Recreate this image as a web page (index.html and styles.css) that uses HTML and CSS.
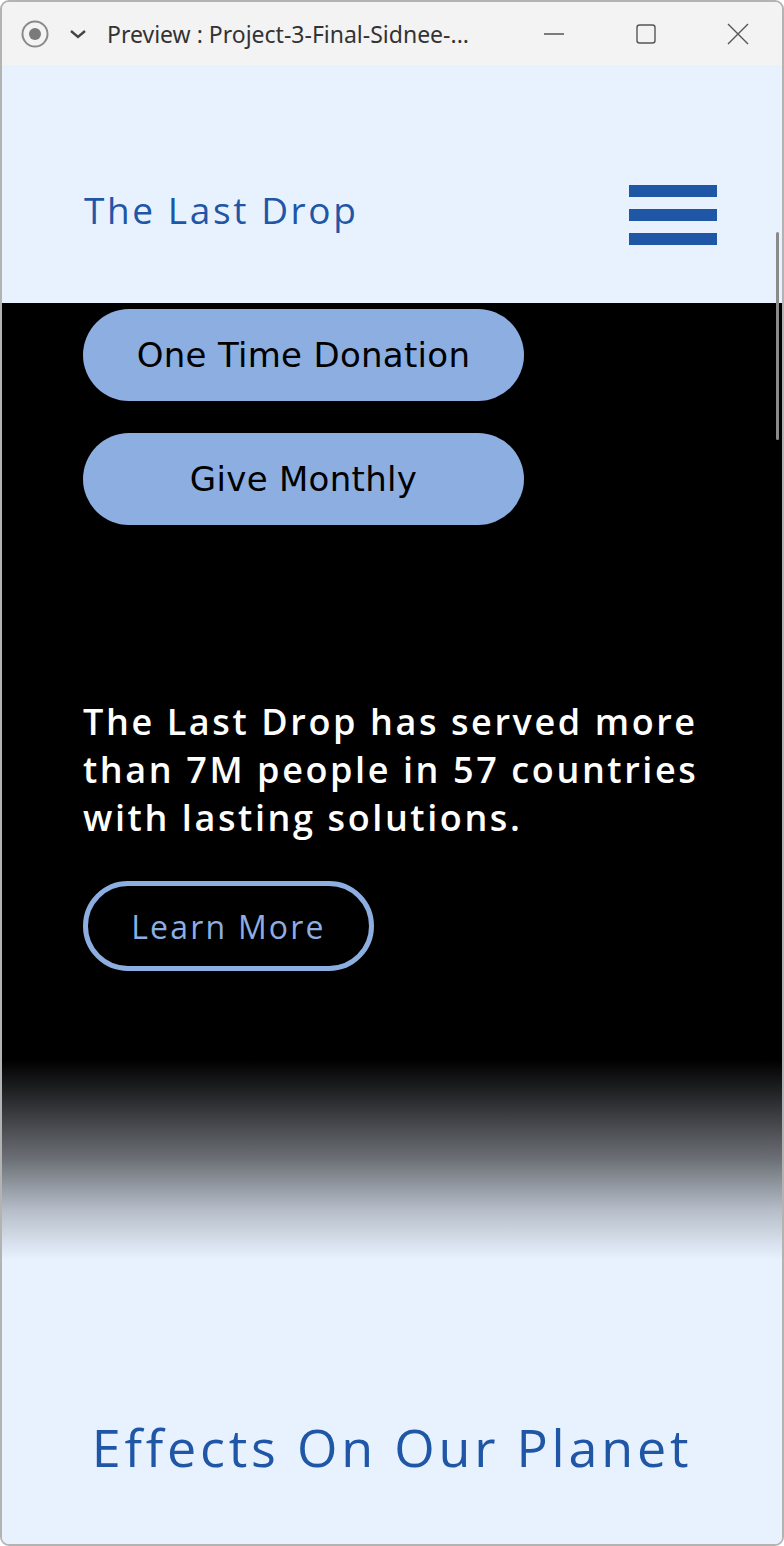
FILE: index.html
```html
<!DOCTYPE html>
<html lang="en">
<head>
<meta charset="utf-8">
<title>The Last Drop</title>
<link rel="stylesheet" href="styles.css">
</head>
<body>
<div class="window">
  <div class="titlebar">
    <div class="tb-left">
      <svg class="tb-rec" width="28" height="28" viewBox="0 0 28 28"><circle cx="14" cy="14" r="12.5" fill="none" stroke="#8a8a8a" stroke-width="2"/><circle cx="14" cy="14" r="6" fill="#7a7a7a"/></svg>
      <svg class="tb-chev" width="18" height="12" viewBox="0 0 18 12"><path d="M2 3 L9 9 L16 3" fill="none" stroke="#444" stroke-width="2.4"/></svg>
      <span class="tb-title">Preview : Project-3-Final-Sidnee-...</span>
    </div>
    <div class="tb-controls">
      <svg width="22" height="22" viewBox="0 0 22 22"><path d="M1 11 H21" stroke="#555" stroke-width="1.4"/></svg>
      <svg width="22" height="22" viewBox="0 0 22 22"><rect x="2" y="2" width="18" height="18" rx="2.5" fill="none" stroke="#555" stroke-width="1.4"/></svg>
      <svg width="22" height="22" viewBox="0 0 22 22"><path d="M1 1 L21 21 M21 1 L1 21" stroke="#555" stroke-width="1.4"/></svg>
    </div>
  </div>
  <div class="page">
    <header class="site-header">
      <span class="logo">The Last Drop</span>
      <div class="burger"><span></span><span></span><span></span></div>
    </header>
    <section class="hero">
      <a class="pill">One Time Donation</a>
      <a class="pill">Give Monthly</a>
      <p class="hero-text">The Last Drop has served more than 7M people in 57 countries with lasting solutions.</p>
      <a class="outline-btn">Learn More</a>
    </section>
    <div class="fade"></div>
    <section class="effects">
      <h2>Effects On Our Planet</h2>
    </section>
    <div class="scrollbar"></div>
  </div>
</div>
</body>
</html>
```
FILE: styles.css
```css
html, body {
  margin: 0;
  padding: 0;
  background: #ffffff;
}
.window {
  width: 784px;
  height: 1546px;
  box-sizing: border-box;
  border: 2px solid #b3b3b3;
  border-radius: 9px;
  overflow: hidden;
  display: flex;
  flex-direction: column;
  background: #f3f3f3;
}
.titlebar {
  height: 63px;
  flex: none;
  display: flex;
  align-items: center;
  justify-content: space-between;
  background: #f3f3f3;
}
.tb-left {
  display: flex;
  align-items: center;
  padding-left: 19px;
}
.tb-chev { margin-left: 20px; }
.tb-title {
  margin-left: 20px;
  font-family: "Noto Sans", "Open Sans", sans-serif;
  font-size: 23px;
  color: #333;
  letter-spacing: 0;
}
.tb-controls {
  display: flex;
  align-items: center;
  gap: 70px;
  padding-right: 33px;
}
.page {
  position: relative;
  flex: 1;
  display: flex;
  flex-direction: column;
  background: #e8f2fe;
}
.site-header {
  height: 238px;
  box-sizing: border-box;
  display: flex;
  align-items: center;
  justify-content: space-between;
  padding: 62px 65px 0 82px;
}
.logo {
  font-family: "Open Sans", sans-serif;
  font-weight: 500;
  font-size: 37px;
  color: #1f56a6;
  letter-spacing: 2.6px;
  margin-top: -12px;
}
.burger {
  width: 88px;
  display: flex;
  flex-direction: column;
  gap: 12px;
}
.burger span {
  display: block;
  height: 12px;
  background: #1f56a6;
}
.hero {
  background: #000;
  display: flex;
  flex-direction: column;
  align-items: flex-start;
  padding: 6px 0 89px 81px;
}
.pill {
  width: 441px;
  height: 92px;
  border-radius: 46px;
  background: #8caee0;
  display: flex;
  align-items: center;
  justify-content: center;
  font-family: "DejaVu Sans", sans-serif;
  font-size: 34px;
  color: #000;
  margin-bottom: 32px;
  letter-spacing: 0.3px;
}
.hero-text {
  margin: 141px 0 39px;
  width: 640px;
  font-family: "Open Sans", sans-serif;
  font-weight: 600;
  font-size: 36px;
  line-height: 48px;
  color: #fff;
  letter-spacing: 2.6px;
}
.outline-btn {
  width: 291px;
  height: 90px;
  box-sizing: border-box;
  border: 5px solid #8caee0;
  border-radius: 45px;
  display: flex;
  align-items: center;
  justify-content: center;
  font-family: "Open Sans", sans-serif;
  font-size: 32px;
  color: #8caee0;
  letter-spacing: 2.2px;
}
.fade {
  height: 200px;
  background: linear-gradient(to bottom, #000 0%, #2a2b2e 20%, #6d7177 50%, #b6bdc8 75%, #e8f2fe 100%);
}
.effects {
  flex: 1;
  display: flex;
  justify-content: center;
}
.effects h2 {
  margin: 155px 0 0;
  font-family: "Open Sans", sans-serif;
  font-weight: 500;
  font-size: 52px;
  line-height: 64px;
  color: #1f56a6;
  letter-spacing: 3.8px;
}
.scrollbar {
  position: absolute;
  right: 3px;
  top: 167px;
  width: 3px;
  height: 208px;
  border-radius: 2px;
  background: #8a8a8a;
}
```
